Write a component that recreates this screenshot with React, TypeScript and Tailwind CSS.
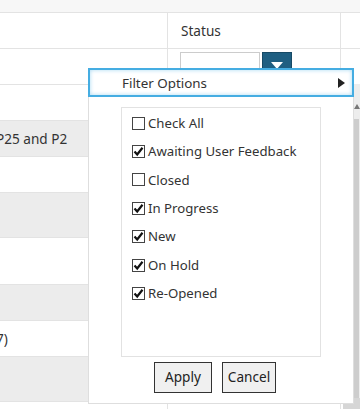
import React from "react";

const items: { label: string; checked: boolean }[] = [
  { label: "Check All", checked: false },
  { label: "Awaiting User Feedback", checked: true },
  { label: "Closed", checked: false },
  { label: "In Progress", checked: true },
  { label: "New", checked: true },
  { label: "On Hold", checked: true },
  { label: "Re-Opened", checked: true },
];

const dataRows: { h: string; gray: boolean; text?: string }[] = [
  { h: "h-[36px]", gray: false },
  { h: "h-[36px]", gray: true, text: "P25 and P2" },
  { h: "h-[36px]", gray: false },
  { h: "h-[45px]", gray: true },
  { h: "h-[47px]", gray: false },
  { h: "h-[36px]", gray: true },
  { h: "h-[36px]", gray: false, text: "7)" },
  { h: "h-[45px]", gray: true },
  { h: "h-[36px]", gray: false },
];

function Check({ checked }: { checked: boolean }) {
  return (
    <span className="w-[13px] h-[13px] border border-[#444] bg-white flex items-center justify-center shrink-0">
      {checked && (
        <svg width="11" height="11" viewBox="0 0 11 11">
          <path d="M1.5 5.5 L4.2 8.5 L9.5 1.8" fill="none" stroke="#111" strokeWidth="2.2" />
        </svg>
      )}
    </span>
  );
}

export default function App() {
  return (
    <div className="relative w-[360px] h-[409px] overflow-hidden bg-white text-[13.2px] text-[#333] font-['Noto_Sans',sans-serif]">
      <div className="h-[13px] bg-[#f7f7f7] border-b border-[#e3e3e3]" />
      <div className="grid grid-cols-[168px_173px_19px] h-[36px] border-b border-[#e3e3e3]">
        <div className="border-r border-[#e3e3e3]" />
        <div className="border-r border-[#e3e3e3] flex items-center pl-[13px] pt-[2px] text-[13.6px]">Status</div>
        <div />
      </div>
      <div className="grid grid-cols-[168px_173px_19px] h-[36px] border-b border-[#e3e3e3]">
        <div className="border-r border-[#e3e3e3]" />
        <div className="border-r border-[#e3e3e3] flex items-start pt-[3px] pl-[12px]">
          <div className="w-[80px] h-[24px] border border-[#cccccc] bg-white" />
          <div className="ml-[2px] w-[30px] h-[24px] bg-[#1f5f82] border border-[#174a66] flex justify-center pt-[9px]">
            <svg width="12" height="7" viewBox="0 0 12 7">
              <path d="M0 0 L12 0 L6 7 Z" fill="#ffffff" />
            </svg>
          </div>
        </div>
        <div />
      </div>
      {dataRows.map((r, i) => (
        <div
          key={i}
          className={`grid grid-cols-[168px_173px_19px] ${r.h} border-b border-[#e3e3e3] ${r.gray ? "bg-[#ececec]" : "bg-white"}`}
        >
          <div className="border-r border-[#e3e3e3] flex items-center overflow-hidden pt-[1px]">
            {r.text && <span className="ml-[-4px] whitespace-nowrap text-[13.6px]">{r.text}</span>}
          </div>
          <div className="border-r border-[#e3e3e3]" />
          <div />
        </div>
      ))}

      {/* page scrollbar */}
      <div className="absolute left-[353px] top-[84px] w-[7px] h-[325px] bg-[#ededed]">
        <div className="mt-[20px] ml-[1px] w-0 h-0 border-l-[3px] border-r-[3px] border-b-[5px] border-l-transparent border-r-transparent border-b-[#777]" />
        <div className="mt-[10px] ml-[1px] w-[5px] h-[279px] bg-[#cdcdcd]" />
      </div>
      <div className="absolute left-[343px] top-[398px] w-[17px] h-[11px] bg-[#d6d6d6]" />

      {/* popup menu */}
      <div className="absolute left-[88px] top-[68px] w-[266px] h-[336px] bg-white border-l border-r border-b border-[#dedede] flex flex-col">
        <div className="h-[29px] border-2 border-[#45ade2] shadow-[inset_0_0_4px_#a9d9f2] bg-white flex items-center pl-[32px] pr-[7px] ml-[-1px] mr-[-1px] text-[13.4px]">
          <span className="flex-1 pt-[1px]">Filter Options</span>
          <svg width="7" height="10" viewBox="0 0 7 10">
            <path d="M0 0 L7 5 L0 10 Z" fill="#222" />
          </svg>
        </div>
        <div className="ml-[32px] mt-[10px] w-[200px] h-[250px] border border-[#e2e2e2] pt-[1px] flex flex-col">
          {items.map((it) => (
            <div key={it.label} className="h-[28.4px] flex items-center pl-[10px] gap-[3px] whitespace-nowrap">
              <Check checked={it.checked} />
              <span className="pt-[1px]">{it.label}</span>
            </div>
          ))}
        </div>
        <div className="flex pl-[65px] gap-[10px] mt-[5px]">
          <button className="w-[58px] h-[31px] bg-[#f0f0f0] border border-[#333] text-[#222] text-[13.6px]">Apply</button>
          <button className="w-[54px] h-[31px] bg-[#f0f0f0] border border-[#333] text-[#222] text-[13.6px]">Cancel</button>
        </div>
      </div>
    </div>
  );
}
